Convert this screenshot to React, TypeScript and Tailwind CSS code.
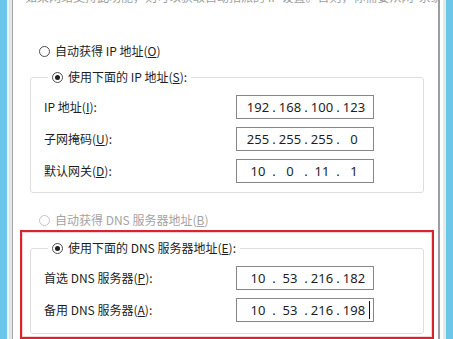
import React from "react";

const cjk = { fontFamily: '"Noto Sans CJK SC", "Noto Sans", sans-serif' };
const num = { fontFamily: '"Noto Sans", "DejaVu Sans", sans-serif' };

function Radio({ checked, disabled }: { checked?: boolean; disabled?: boolean }) {
  return (
    <span
      className={`flex h-[11px] w-[11px] shrink-0 items-center justify-center rounded-full border bg-white ${
        disabled ? "border-[#c4c4c4]" : "border-[#4d4d4d]"
      }`}
    >
      {checked && <span className="h-[5px] w-[5px] rounded-full bg-[#1f1f1f]" />}
    </span>
  );
}

function RadioLabel({
  text,
  keyChar,
  suffix,
  checked,
  disabled,
}: {
  text: string;
  keyChar: string;
  suffix?: string;
  checked?: boolean;
  disabled?: boolean;
}) {
  return (
    <span className="flex h-[16px] items-center gap-[5px]">
      <Radio checked={checked} disabled={disabled} />
      <span
        className={`text-[12px] leading-[16px] whitespace-nowrap ${
          disabled ? "text-[#a3a3a3]" : "text-[#1e1e1e]"
        }`}
        style={cjk}
      >
        {text}(<span className="underline">{keyChar}</span>){suffix}
      </span>
    </span>
  );
}

function IpBox({ parts, cursor }: { parts: string[]; cursor?: boolean }) {
  return (
    <div
      className="flex h-[24px] w-[138px] items-center border border-[#878787] bg-white pl-[8px] text-[13px] leading-[16px] text-[#1e1e1e]"
      style={num}
    >
      {parts.map((p, i) => (
        <React.Fragment key={i}>
          {i > 0 && <span className="w-[6px] text-center">.</span>}
          <span className="relative w-[26px] text-center">
            {p}
            {cursor && i === 3 && (
              <span className="absolute right-[-3px] top-[-1px] h-[18px] w-[1px] bg-[#111]" />
            )}
          </span>
        </React.Fragment>
      ))}
    </div>
  );
}

function Row({ label, keyChar, parts, cursor }: { label: string; keyChar: string; parts: string[]; cursor?: boolean }) {
  return (
    <div className="flex items-center">
      <span className="w-[192px] text-[12px] leading-[16px] text-[#1e1e1e] whitespace-nowrap" style={cjk}>
        {label}(<span className="underline">{keyChar}</span>):
      </span>
      <IpBox parts={parts} cursor={cursor} />
    </div>
  );
}

export default function App() {
  return (
    <div className="flex h-[339px] w-[453px] overflow-hidden bg-white">
      <div className="w-[7px] bg-[#6cc6ea]" />
      <div className="w-[2px] bg-[#eaf4f7]" />
      <div className="w-[3px] bg-[#e3e5e5]" />
      <div className="w-[1px] bg-[#a9a9a9]" />

      <div className="flex w-[425px] flex-col">
        {/* top line of the hint text, scrolled mostly out of view */}
        <div className="h-[6px] overflow-hidden pl-[12px]">
          <div className="-mt-[11px] text-[12px] leading-[16px] text-[#9e9e9e] whitespace-nowrap" style={cjk}>
            如果网络支持此功能，则可以获取自动指派的 IP 设置。否则，你需要从网 &nbsp;系统管
          </div>
        </div>

        <div className="ml-[26px] mt-[39px]">
          <RadioLabel text="自动获得 IP 地址" keyChar="O" />
        </div>

        <fieldset className="ml-[17px] mt-[10px] w-[394px] rounded-[3px] border border-[#dcdfe2] pb-[9px] pl-[13px]">
          <legend className="ml-[4px] px-[4px]">
            <RadioLabel text="使用下面的 IP 地址" keyChar="S" suffix=":" checked />
          </legend>
          <div className="mt-[10px] flex flex-col gap-[8px]">
            <Row label="IP 地址" keyChar="I" parts={["192", "168", "100", "123"]} />
            <Row label="子网掩码" keyChar="U" parts={["255", "255", "255", "0"]} />
            <Row label="默认网关" keyChar="D" parts={["10", "0", "11", "1"]} />
          </div>
        </fieldset>

        <div className="ml-[26px] mt-[19px]">
          <RadioLabel text="自动获得 DNS 服务器地址" keyChar="B" disabled />
        </div>

        <div className="ml-[7px] mt-[2px] w-[414px] border-2 border-[#d9232e] pb-[3px] pl-[8px] pt-[8px] shadow-[inset_0_0_0_1px_#f6d3d5]">
          <fieldset className="w-[394px] rounded-[3px] border border-[#dcdfe2] pb-[11px] pl-[13px]">
            <legend className="ml-[4px] px-[4px]">
              <RadioLabel text="使用下面的 DNS 服务器地址" keyChar="E" suffix=":" checked />
            </legend>
            <div className="mt-[10px] flex flex-col gap-[8px]">
              <Row label="首选 DNS 服务器" keyChar="P" parts={["10", "53", "216", "182"]} />
              <Row label="备用 DNS 服务器" keyChar="A" parts={["10", "53", "216", "198"]} cursor />
            </div>
          </fieldset>
        </div>
      </div>

      <div className="w-[2px] bg-[#9c9ca9]" />
      <div className="w-[3px] bg-white" />
      <div className="w-[3px] bg-[#e5eae6]" />
      <div className="w-[7px] bg-[#6cc6ea]" />
    </div>
  );
}
